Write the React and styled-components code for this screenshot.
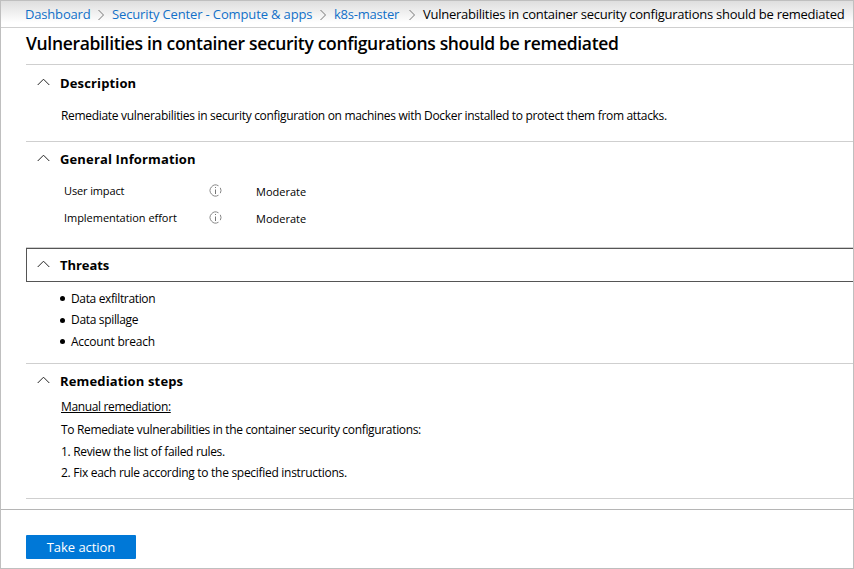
import React from "react";
import styled, { createGlobalStyle } from "styled-components";

const GlobalStyle = createGlobalStyle`
  * { box-sizing: border-box; }
  body {
    margin: 0;
    background: #fff;
    color: #000;
    font-family: "Open Sans", "Noto Sans", sans-serif;
  }
`;

const Blade = styled.div`
  display: flex;
  flex-direction: column;
  width: 854px;
  height: 569px;
  border: 1px solid #bfbfbf;
  overflow: hidden;
  background: #fff;
`;

const Text = styled.span`
  letter-spacing: ${(p) => p.$spacing || 0}px;
  white-space: nowrap;
`;

const Breadcrumb = styled.nav`
  display: flex;
  flex: none;
  height: 27px;
  padding-left: 24px;
  border-bottom: 1px solid #cfcfcf;
  background: linear-gradient(#dedede, #fff 22px);
  font-size: 13px;
  line-height: 27px;
`;

const Crumb = styled(Text)`
  flex: none;
  width: ${(p) => p.$width}px;
  color: ${(p) => (p.$current ? "#000" : "#1170c8")};
`;

const Separator = styled.svg`
  flex: none;
  width: 8px;
  height: 12px;
  margin: 8px 7px 0 6px;
  fill: none;
  stroke: #777;
`;

const Content = styled.main`
  flex: none;
  height: 481px;
  padding-left: 25px;
`;

const Title = styled.h1`
  height: 36px;
  margin: 0;
  font-size: 17.5px;
  font-weight: 600;
  line-height: 31px;
  letter-spacing: -0.33px;
  white-space: nowrap;
`;

const Section = styled.section`
  height: ${(p) => p.$height}px;
  padding-top: ${(p) => p.$offset || 0}px;
  border-top: 1px solid #cfcfcf;
`;

const SectionHeader = styled.header`
  display: flex;
  align-items: center;
  height: 34px;
  padding-left: 9.5px;
  border: 1px solid ${(p) => (p.$focused ? "#555" : "transparent")};
  border-right: 0;
`;

const Chevron = styled.svg`
  width: 13px;
  height: 8px;
  margin: 0 10.5px 2px 0;
  fill: none;
  stroke: #222;
`;

const Heading = styled.h2`
  margin: 0;
  font-size: 13px;
  font-weight: 700;
  line-height: 20px;
  letter-spacing: ${(p) => p.$spacing}px;
`;

const Body = styled.div`
  padding: ${(p) => p.$top || 0}px 0 0 35px;
  font-size: 12px;
`;

const Line = styled.p`
  height: ${(p) => p.$height || 22}px;
  margin: 0;
  line-height: 18px;
  letter-spacing: ${(p) => p.$spacing}px;
  white-space: nowrap;
`;

const Underlined = styled.span`
  text-decoration: underline;
  text-decoration-thickness: 1px;
  text-underline-offset: 1px;
  text-decoration-skip-ink: none;
`;

const Facts = styled.dl`
  margin: 0;
  padding: 4px 0 0 38px;
  font-size: 11px;
`;

const Fact = styled.div`
  display: grid;
  grid-template-columns: 145px 47px auto;
  height: 27px;
  line-height: 22px;
`;

const FactName = styled.dt`
  letter-spacing: ${(p) => p.$spacing}px;
`;

const FactValue = styled.dd`
  margin: 1px 0 0;
`;

const InfoIcon = styled.svg`
  width: 13px;
  height: 13px;
  margin-top: 4px;
`;

const Bullets = styled.ul`
  margin: 0;
  padding: 6px 0 0 33px;
  list-style: none;
  font-size: 12px;
`;

const Bullet = styled.li`
  display: flex;
  align-items: center;
  height: 21.5px;
  line-height: 22px;

  &::before {
    content: "";
    width: 5px;
    height: 5px;
    margin: 0 6px 0 1px;
    border-radius: 50%;
    background: #000;
  }
`;

const Footer = styled.footer`
  flex: 1;
  padding: 25px 0 0 25px;
  border-top: 1px solid #b5b5b5;
`;

const ActionButton = styled.button`
  display: block;
  width: 110px;
  height: 24px;
  padding: 0;
  border: 0;
  border-radius: 1px;
  background: #0078d7;
  color: #fff;
  font: 13px/24px "Open Sans", "Noto Sans", sans-serif;
  letter-spacing: -0.05px;
`;

const crumbs = [
  { label: "Dashboard", width: 66, spacing: -0.18 },
  { label: "Security Center - Compute & apps", width: 201, spacing: -0.14 },
  { label: "k8s-master", width: 68, spacing: -0.23 },
];

const pageTitle =
  "Vulnerabilities in container security configurations should be remediated";

const threats = [
  { label: "Data exfiltration", spacing: -0.36 },
  { label: "Data spillage", spacing: -0.33 },
  { label: "Account breach", spacing: -0.24 },
];

const facts = [
  { name: "User impact", value: "Moderate", spacing: -0.13 },
  { name: "Implementation effort", value: "Moderate", spacing: -0.04 },
];

function Header({ children, focused, spacing = 0.14 }) {
  return (
    <SectionHeader $focused={focused}>
      <Chevron viewBox="0 0 13 8">
        <path d="M.7 7 6.5 1.2 12.3 7" />
      </Chevron>
      <Heading $spacing={spacing}>{children}</Heading>
    </SectionHeader>
  );
}

export default function App() {
  return (
    <>
      <GlobalStyle />
      <Blade>
        <Breadcrumb>
          {crumbs.map((c) => (
            <React.Fragment key={c.label}>
              <Crumb $width={c.width} $spacing={c.spacing}>
                {c.label}
              </Crumb>
              <Separator viewBox="0 0 8 12">
                <path d="M1.5 1 6.5 6l-5 5" />
              </Separator>
            </React.Fragment>
          ))}
          <Crumb $current $spacing={-0.255}>
            {pageTitle}
          </Crumb>
        </Breadcrumb>
        <Content>
          <Title>{pageTitle}</Title>
          <Section $height={77} $offset={1}>
            <Header>Description</Header>
            <Body $top={7}>
              <Line $spacing={-0.31}>
                Remediate vulnerabilities in security configuration on machines
                with Docker installed to protect them from attacks.
              </Line>
            </Body>
          </Section>
          <Section $height={106}>
            <Header>General Information</Header>
            <Facts>
              {facts.map((f) => (
                <Fact key={f.name}>
                  <FactName $spacing={f.spacing}>{f.name}</FactName>
                  <InfoIcon viewBox="0 0 13 13">
                    <path
                      d="M9.5 11.2A5.5 5.5 0 1 1 9.5 1.8M11.3 3.8A5.5 5.5 0 0 1 11.3 9.2"
                      fill="none"
                      stroke="#888"
                    />
                    <path d="M6 3h1v1H6zM6 5.5h1V10H6z" fill="#777" />
                  </InfoIcon>
                  <FactValue>{f.value}</FactValue>
                </Fact>
              ))}
            </Facts>
          </Section>
          <Section $height={116}>
            <Header focused spacing={-0.05}>
              Threats
            </Header>
            <Bullets>
              {threats.map((t) => (
                <Bullet key={t.label}>
                  <Text $spacing={t.spacing}>{t.label}</Text>
                </Bullet>
              ))}
            </Bullets>
          </Section>
          <Section $height={135}>
            <Header>Remediation steps</Header>
            <Body>
              <Line $height={23} $spacing={-0.36}>
                <Underlined>Manual remediation:</Underlined>
              </Line>
              <Line $spacing={-0.335}>
                To Remediate vulnerabilities in the container security
                configurations:
              </Line>
              <Line $height={21} $spacing={-0.33}>
                1. Review the list of failed rules.
              </Line>
              <Line $spacing={-0.29}>
                2. Fix each rule according to the specified instructions.
              </Line>
            </Body>
          </Section>
          <Section $height={11} />
        </Content>
        <Footer>
          <ActionButton>Take action</ActionButton>
        </Footer>
      </Blade>
    </>
  );
}
